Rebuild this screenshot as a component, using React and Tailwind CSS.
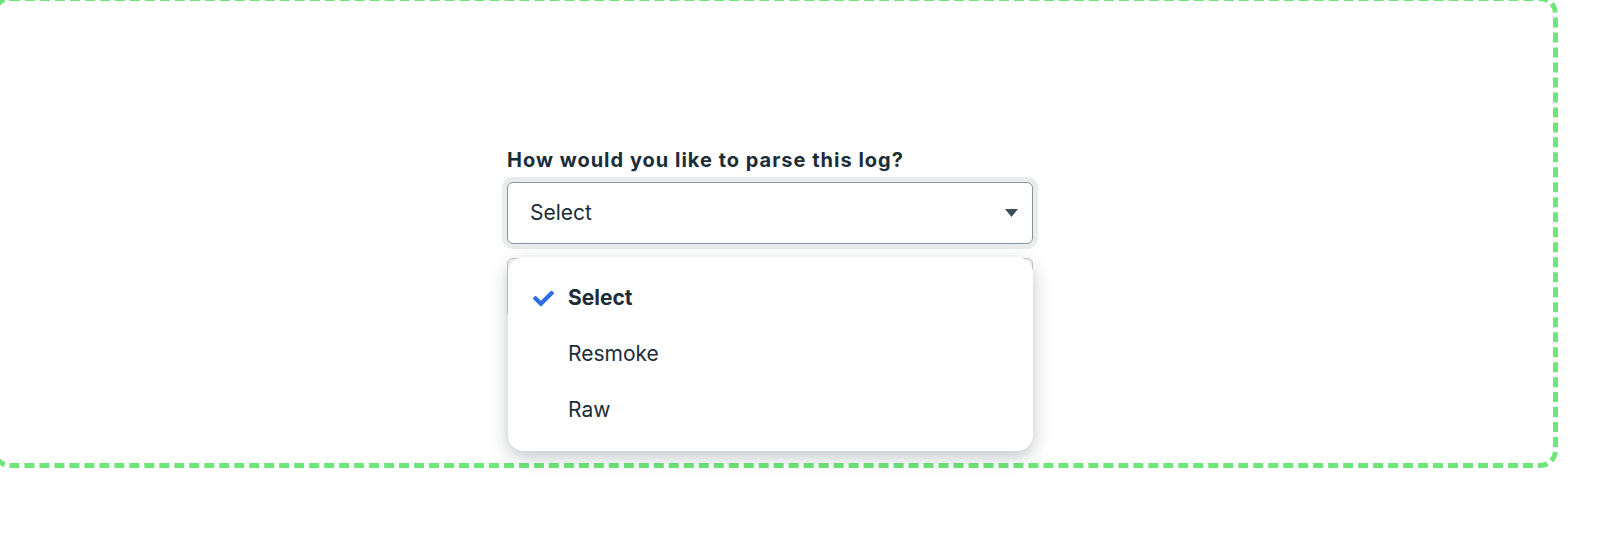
import React from "react";
import { FaCheck } from "react-icons/fa";

export default function App() {
  return (
    <div className="h-[547px] w-[1600px] overflow-hidden bg-white" style={{ fontFamily: "Inter, 'Noto Sans', sans-serif" }}>
      <div className="-mt-[4px] -ml-[8px] h-[472px] w-[1566px] rounded-[18px] border-[5px] border-dashed border-[#6ee77a] pl-[510px] pt-[147px]">
        <div className="text-[20px] font-bold leading-[24px] tracking-[1px] text-[#1c2d38]">How would you like to parse this log?</div>
        <div className="relative mt-[10px] w-[526px]">
          <div className="flex h-[62px] items-center justify-between rounded-[6px] border border-[#88959a] bg-white pl-[22px] pr-[14px] shadow-[0_0_0_5px_#e8eceb]">
            <span className="text-[21px] leading-[24px] text-[#1c2d38]">Select</span>
            <svg width="13" height="8" viewBox="0 0 13 8"><path d="M0 0 L13 0 L6.5 8 Z" fill="#3d4f58" /></svg>
          </div>
          <div className="mt-[14px] h-[60px] rounded-[6px] border border-[#c3c9c9] bg-[#f7f8f8]" />
          <div className="absolute left-[1px] top-[75px] w-[525px] rounded-[16px] bg-white py-[13px] shadow-[0_6px_18px_rgba(0,30,43,0.25)]">
            <div className="flex h-[56px] items-center pl-[25px]">
              <FaCheck className="text-[#2b6ee6]" size={21} />
              <span className="ml-[14px] text-[21px] font-bold text-[#1c2d38]">Select</span>
            </div>
            <div className="flex h-[56px] items-center pl-[60px]">
              <span className="text-[21px] text-[#1c2d38]">Resmoke</span>
            </div>
            <div className="flex h-[56px] items-center pl-[60px]">
              <span className="text-[21px] text-[#1c2d38]">Raw</span>
            </div>
          </div>
        </div>
      </div>
    </div>
  );
}
